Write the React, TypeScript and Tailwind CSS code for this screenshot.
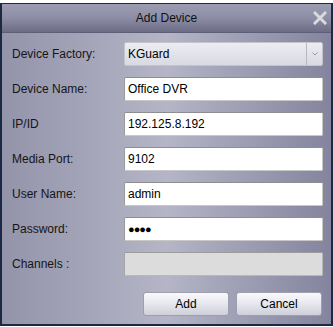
import React from "react";

const rows: { label: string; value: string; kind: "select" | "input" | "password" | "disabled" }[] = [
  { label: "Device Factory:", value: "KGuard", kind: "select" },
  { label: "Device Name:", value: "Office DVR", kind: "input" },
  { label: "IP/ID", value: "192.125.8.192", kind: "input" },
  { label: "Media Port:", value: "9102", kind: "input" },
  { label: "User Name:", value: "admin", kind: "input" },
  { label: "Password:", value: "●●●●", kind: "password" },
  { label: "Channels :", value: "", kind: "disabled" },
];

function Field({ r }: { r: (typeof rows)[number] }) {
  if (r.kind === "select") {
    return (
      <div className="h-[24px] w-[199px] flex rounded-[2px] border border-[#c4c4cc] bg-gradient-to-b from-[#ececf2] to-[#d9d9e2]">
        <div className="flex-1 flex items-center pl-[3px] text-[12px] text-black">{r.value}</div>
        <div className="w-[16px] border-l border-[#b8b8c2] flex items-center justify-center">
          <svg width="6" height="4" viewBox="0 0 6 4">
            <path d="M0.5 0.5 L3 3 L5.5 0.5" stroke="#9a9aa4" strokeWidth="1" fill="none" />
          </svg>
        </div>
      </div>
    );
  }
  if (r.kind === "disabled") {
    return <div className="h-[24px] w-[199px] rounded-[2px] border border-[#b8b8b8] border-t-[#9c9c9c] border-l-[#a4a4a4] bg-[#dcdcdc]" />;
  }
  return (
    <div className="h-[24px] w-[199px] flex items-center rounded-[2px] border border-[#c8c8c8] border-t-[#8e8e8e] border-l-[#9a9a9a] bg-white pl-[3px] text-black">
      {r.kind === "password" ? (
        <span className="text-[11px] tracking-[-1px] leading-none">{r.value}</span>
      ) : (
        <span className="text-[12px]">{r.value}</span>
      )}
    </div>
  );
}

export default function App() {
  return (
    <div className="w-[333px] h-[327px] bg-white pt-[3px]" style={{ fontFamily: '"Liberation Sans", Arial, sans-serif' }}>
      <div className="h-[323px] border-x-2 border-t border-b-2 border-[#1b2942] flex flex-col">
        <div className="h-[29px] relative flex items-center justify-center bg-gradient-to-b from-[#9c9cb2] via-[#8d8da5] to-[#6c6c86] border-b border-[#5e5e78]">
          <span className="text-[12px] text-[#111]">Add Device</span>
          <svg className="absolute right-[4px] top-[7px]" width="14" height="14" viewBox="0 0 14 14">
            <path d="M2 2 L12 12 M12 2 L2 12" stroke="#dadade" strokeWidth="3" strokeLinecap="square" />
          </svg>
        </div>
        <div className="flex-1 bg-gradient-to-r from-[#9393aa] via-[#b5b5c7] to-[#84849e] pt-[9px] pl-[10px]">
          <div className="flex flex-col gap-[11px]">
            {rows.map((r) => (
              <div key={r.label} className="flex items-center h-[24px]">
                <div className="w-[112px] text-[12px] text-[#151515]">{r.label}</div>
                <Field r={r} />
              </div>
            ))}
          </div>
          <div className="flex gap-[7px] mt-[16px] pl-[131px]">
            {["Add", "Cancel"].map((b) => (
              <div
                key={b}
                className="w-[86px] h-[24px] flex items-center justify-center rounded-[3px] border border-[#9e9eae] bg-gradient-to-b from-[#fafafc] via-[#e6e6ee] to-[#cfcfda] text-[12px] text-black"
              >
                {b}
              </div>
            ))}
          </div>
        </div>
      </div>
    </div>
  );
}
